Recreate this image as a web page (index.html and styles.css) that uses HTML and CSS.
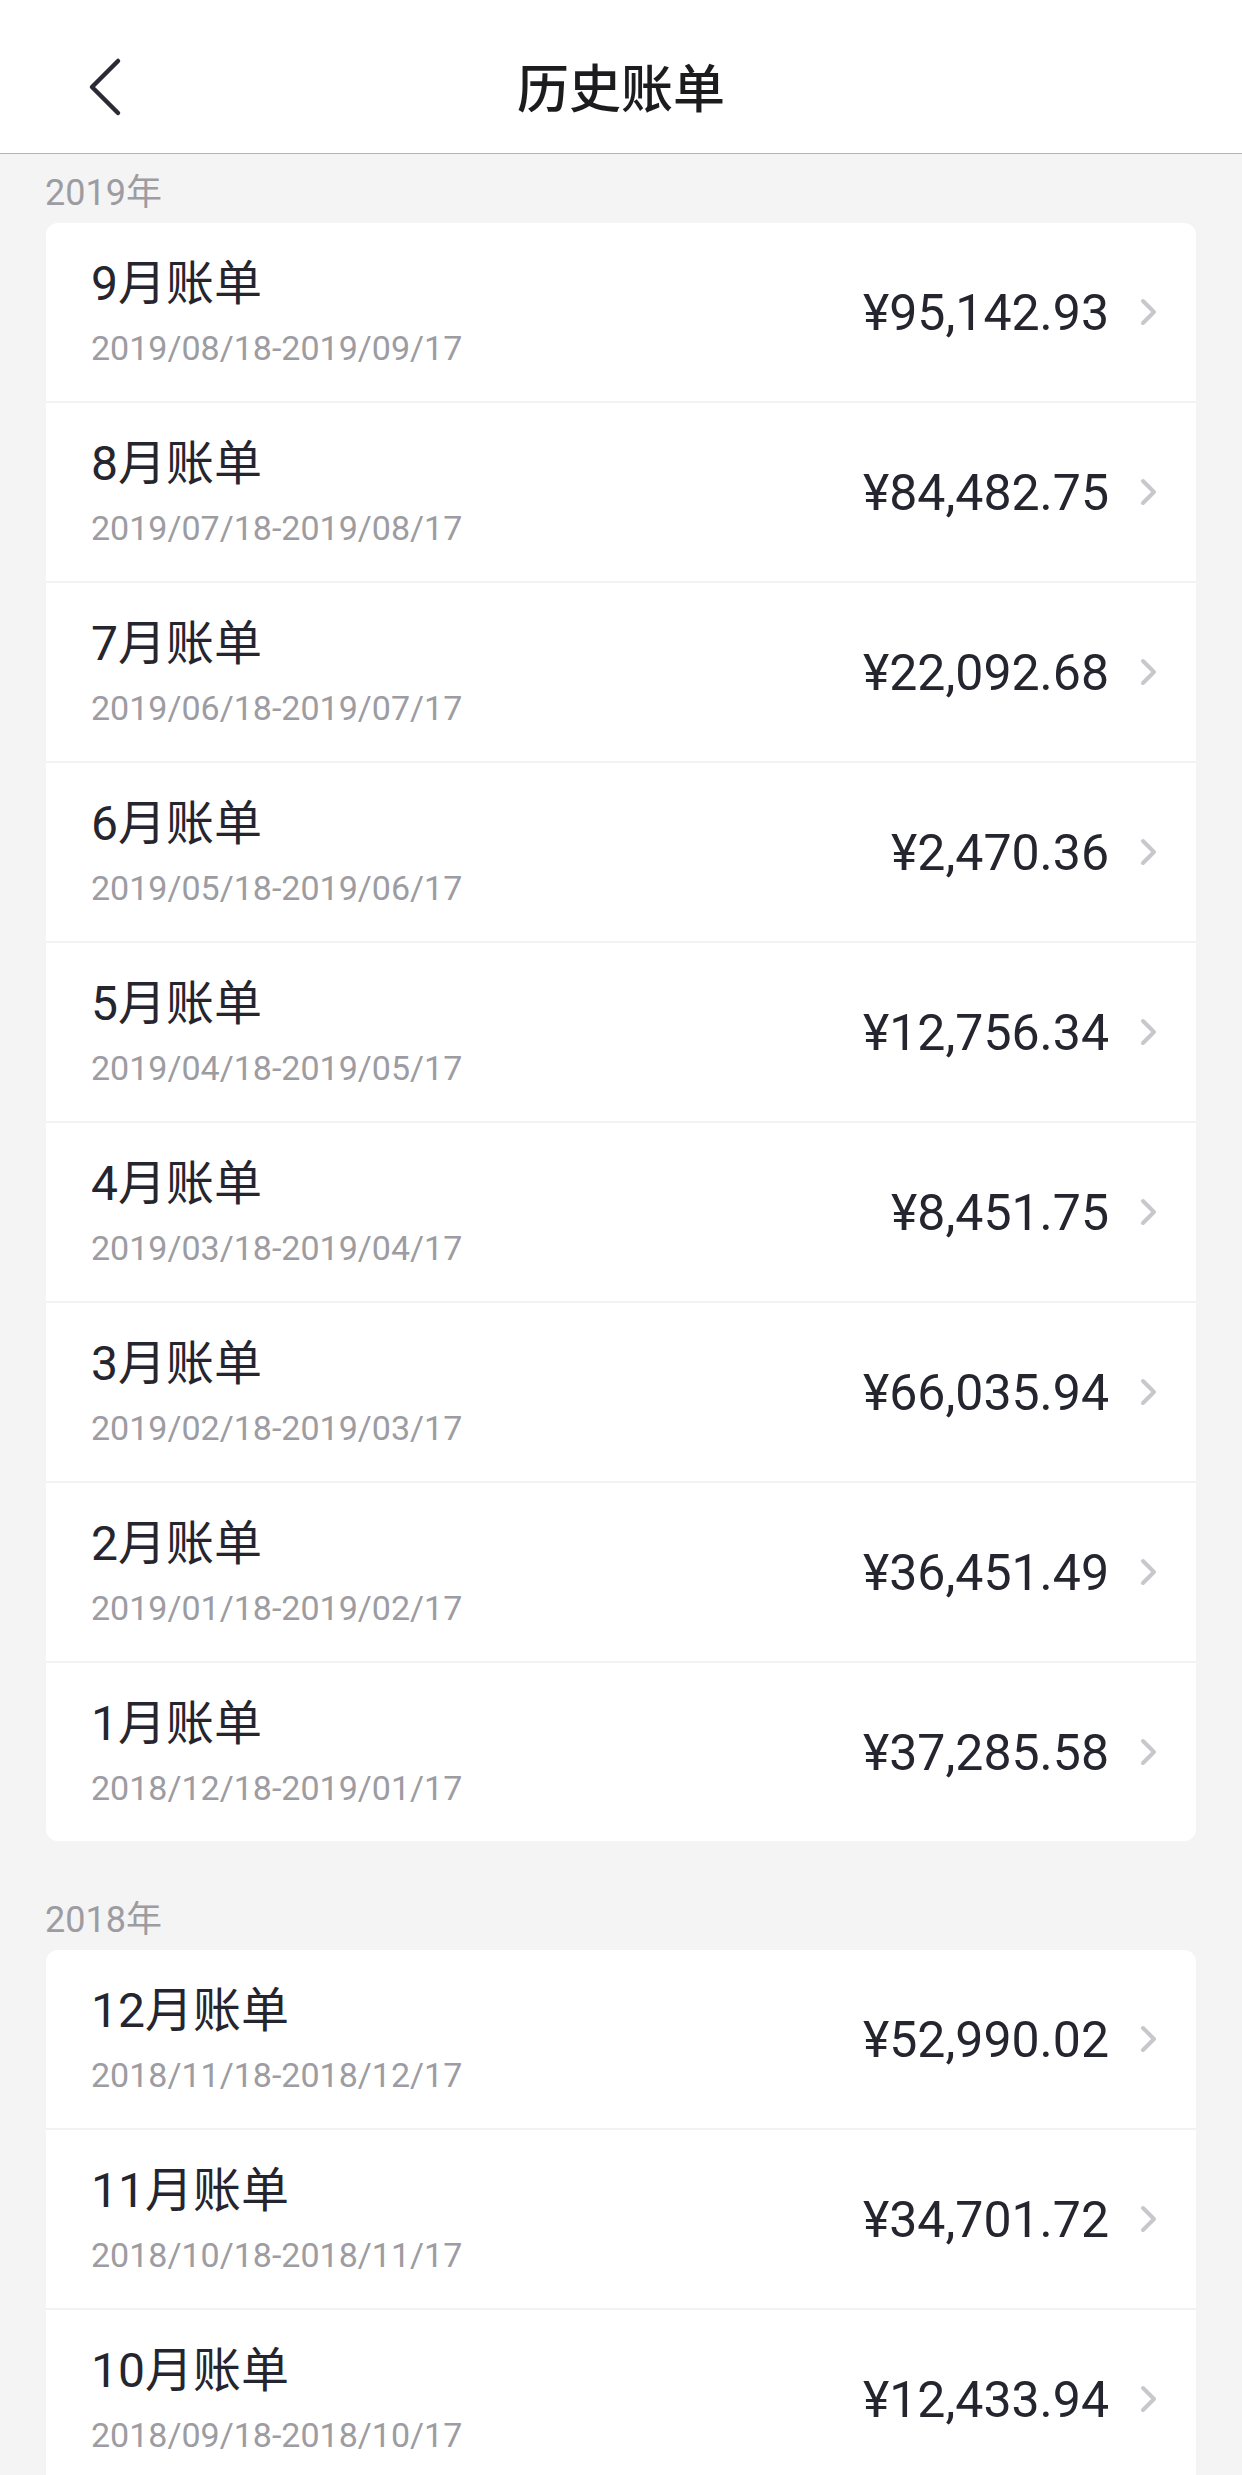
FILE: index.html
```html
<!DOCTYPE html>
<html lang="zh-CN">
<head>
<meta charset="utf-8">
<title>历史账单</title>
<link rel="stylesheet" href="styles.css">
</head>
<body>
<header class="nav">
  <div class="nav-left">
    <svg class="back" width="40" height="60" viewBox="0 0 40 60" aria-hidden="true">
      <path d="M34 4 L8 30 L34 56" fill="none" stroke="#2b2b35" stroke-width="4.5" stroke-linecap="round" stroke-linejoin="round"/>
    </svg>
  </div>
  <h1 class="nav-title">历史账单</h1>
  <div class="nav-right"></div>
</header>
<main class="content">
  <section class="year-group first">
    <div class="year">2019年</div>
    <ul class="bills">
      <li class="bill"><div class="bill-info"><div class="bill-month">9月账单</div><div class="bill-range">2019/08/18-2019/09/17</div></div><div class="bill-amount">¥95,142.93</div><svg class="chev" width="18" height="28" viewBox="0 0 18 28"><path d="M3 3 L14 14 L3 25" fill="none" stroke="#c7c7cc" stroke-width="4" stroke-linecap="round" stroke-linejoin="round"/></svg></li>
      <li class="bill"><div class="bill-info"><div class="bill-month">8月账单</div><div class="bill-range">2019/07/18-2019/08/17</div></div><div class="bill-amount">¥84,482.75</div><svg class="chev" width="18" height="28" viewBox="0 0 18 28"><path d="M3 3 L14 14 L3 25" fill="none" stroke="#c7c7cc" stroke-width="4" stroke-linecap="round" stroke-linejoin="round"/></svg></li>
      <li class="bill"><div class="bill-info"><div class="bill-month">7月账单</div><div class="bill-range">2019/06/18-2019/07/17</div></div><div class="bill-amount">¥22,092.68</div><svg class="chev" width="18" height="28" viewBox="0 0 18 28"><path d="M3 3 L14 14 L3 25" fill="none" stroke="#c7c7cc" stroke-width="4" stroke-linecap="round" stroke-linejoin="round"/></svg></li>
      <li class="bill"><div class="bill-info"><div class="bill-month">6月账单</div><div class="bill-range">2019/05/18-2019/06/17</div></div><div class="bill-amount">¥2,470.36</div><svg class="chev" width="18" height="28" viewBox="0 0 18 28"><path d="M3 3 L14 14 L3 25" fill="none" stroke="#c7c7cc" stroke-width="4" stroke-linecap="round" stroke-linejoin="round"/></svg></li>
      <li class="bill"><div class="bill-info"><div class="bill-month">5月账单</div><div class="bill-range">2019/04/18-2019/05/17</div></div><div class="bill-amount">¥12,756.34</div><svg class="chev" width="18" height="28" viewBox="0 0 18 28"><path d="M3 3 L14 14 L3 25" fill="none" stroke="#c7c7cc" stroke-width="4" stroke-linecap="round" stroke-linejoin="round"/></svg></li>
      <li class="bill"><div class="bill-info"><div class="bill-month">4月账单</div><div class="bill-range">2019/03/18-2019/04/17</div></div><div class="bill-amount">¥8,451.75</div><svg class="chev" width="18" height="28" viewBox="0 0 18 28"><path d="M3 3 L14 14 L3 25" fill="none" stroke="#c7c7cc" stroke-width="4" stroke-linecap="round" stroke-linejoin="round"/></svg></li>
      <li class="bill"><div class="bill-info"><div class="bill-month">3月账单</div><div class="bill-range">2019/02/18-2019/03/17</div></div><div class="bill-amount">¥66,035.94</div><svg class="chev" width="18" height="28" viewBox="0 0 18 28"><path d="M3 3 L14 14 L3 25" fill="none" stroke="#c7c7cc" stroke-width="4" stroke-linecap="round" stroke-linejoin="round"/></svg></li>
      <li class="bill"><div class="bill-info"><div class="bill-month">2月账单</div><div class="bill-range">2019/01/18-2019/02/17</div></div><div class="bill-amount">¥36,451.49</div><svg class="chev" width="18" height="28" viewBox="0 0 18 28"><path d="M3 3 L14 14 L3 25" fill="none" stroke="#c7c7cc" stroke-width="4" stroke-linecap="round" stroke-linejoin="round"/></svg></li>
      <li class="bill"><div class="bill-info"><div class="bill-month">1月账单</div><div class="bill-range">2018/12/18-2019/01/17</div></div><div class="bill-amount">¥37,285.58</div><svg class="chev" width="18" height="28" viewBox="0 0 18 28"><path d="M3 3 L14 14 L3 25" fill="none" stroke="#c7c7cc" stroke-width="4" stroke-linecap="round" stroke-linejoin="round"/></svg></li>
    </ul>
  </section>
  <section class="year-group">
    <div class="year">2018年</div>
    <ul class="bills">
      <li class="bill"><div class="bill-info"><div class="bill-month">12月账单</div><div class="bill-range">2018/11/18-2018/12/17</div></div><div class="bill-amount">¥52,990.02</div><svg class="chev" width="18" height="28" viewBox="0 0 18 28"><path d="M3 3 L14 14 L3 25" fill="none" stroke="#c7c7cc" stroke-width="4" stroke-linecap="round" stroke-linejoin="round"/></svg></li>
      <li class="bill"><div class="bill-info"><div class="bill-month">11月账单</div><div class="bill-range">2018/10/18-2018/11/17</div></div><div class="bill-amount">¥34,701.72</div><svg class="chev" width="18" height="28" viewBox="0 0 18 28"><path d="M3 3 L14 14 L3 25" fill="none" stroke="#c7c7cc" stroke-width="4" stroke-linecap="round" stroke-linejoin="round"/></svg></li>
      <li class="bill"><div class="bill-info"><div class="bill-month">10月账单</div><div class="bill-range">2018/09/18-2018/10/17</div></div><div class="bill-amount">¥12,433.94</div><svg class="chev" width="18" height="28" viewBox="0 0 18 28"><path d="M3 3 L14 14 L3 25" fill="none" stroke="#c7c7cc" stroke-width="4" stroke-linecap="round" stroke-linejoin="round"/></svg></li>
    </ul>
  </section>
</main>
</body>
</html>
```
FILE: styles.css
```css
* {
  box-sizing: border-box;
}

html, body {
  margin: 0;
  padding: 0;
}

body {
  background: #f4f4f4;
  font-family: "Noto Sans CJK SC", "Noto Sans", sans-serif;
  color: #25252f;
}

.nav {
  height: 154px;
  padding-top: 18px;
  background: #ffffff;
  border-bottom: 1px solid #b4b4b4;
  display: grid;
  grid-template-columns: 1fr auto 1fr;
  align-items: center;
}

.nav-left {
  padding-left: 84px;
  display: flex;
  align-items: center;
}

.back {
  display: block;
  margin-top: 3px;
}

.nav-title {
  margin: 0;
  font-size: 52px;
  line-height: 70px;
  font-weight: 500;
  color: #1c1c1e;
  letter-spacing: 0;
}

.content {
  padding-bottom: 40px;
}

.year-group {
  margin-top: 40px;
}

.year-group.first {
  margin-top: 0;
}

.year {
  font-family: Roboto, "Noto Sans CJK SC", sans-serif;
  font-size: 36px;
  line-height: 46px;
  padding: 16px 45px 7px;
  color: #9c9ca2;
}

.bills {
  list-style: none;
  margin: 0 46px;
  padding: 0;
  background: #ffffff;
  border-radius: 12px;
  overflow: hidden;
}

.bill {
  height: 178px;
  display: flex;
  align-items: center;
  padding: 0 38px 0 45px;
}

.bill + .bill {
  border-top: 2px solid #f2f2f2;
  height: 180px;
}

.bill-info {
  flex: 1;
  display: flex;
  flex-direction: column;
}

.bill-month {
  font-family: Roboto, "Noto Sans CJK SC", sans-serif;
  font-size: 48px;
  line-height: 60px;
  color: #25252f;
}

.bill-range {
  font-family: Roboto, "Noto Sans CJK SC", sans-serif;
  margin-top: 11px;
  font-size: 34px;
  line-height: 46px;
  color: #9c9ca2;
}

.bill-amount {
  font-family: Roboto, "Noto Sans CJK SC", sans-serif;
  font-size: 50px;
  line-height: 60px;
  margin-top: 2px;
  color: #25252f;
}

.chev {
  display: block;
  margin-left: 31px;
  flex: none;
}
```
